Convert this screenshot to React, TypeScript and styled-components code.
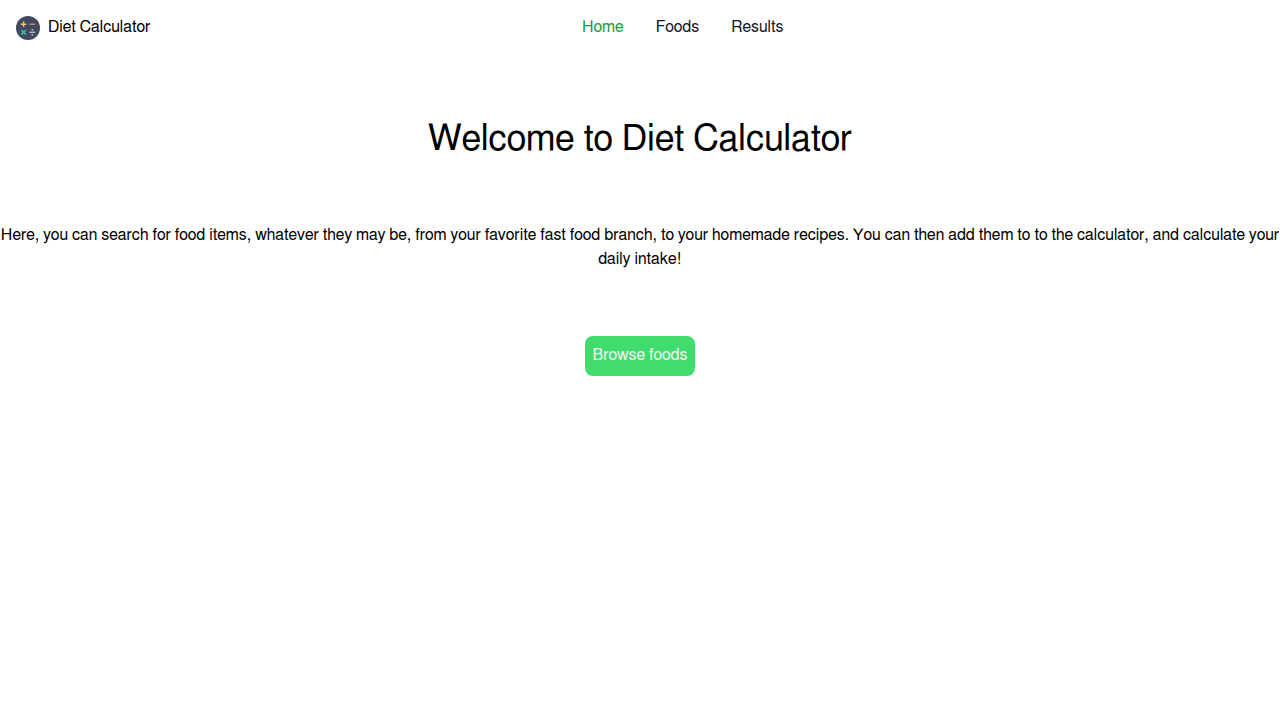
import styled, { createGlobalStyle } from "styled-components";

const GlobalStyle = createGlobalStyle`
  *, *::before, *::after { box-sizing: border-box; }
  body {
    margin: 0;
    background: #fff;
    color: #000;
    font-family: FreeSans, "Liberation Sans", Arial, sans-serif;
    font-kerning: none;
    font-size: 16px;
    line-height: 24px;
  }
`;

const Header = styled.header`
  display: flex;
  justify-content: space-between;
  padding: 16px 65px 16px 16px;
`;

const Brand = styled.a`
  display: flex;
  gap: 8px;
  color: inherit;
  text-decoration: none;
`;

const BrandName = styled.span`
  line-height: 22px;
`;

const Nav = styled.nav`
  display: flex;
  gap: 32px;
`;

const NavLink = styled.a<{ $active?: boolean }>`
  color: ${({ $active }) => ($active ? "#169c3f" : "#111827")};
  line-height: 22px;
  text-decoration: none;
`;

const Main = styled.main`
  display: flex;
  flex-direction: column;
  align-items: center;
  gap: 64px;
  padding-top: 63px;
  text-align: center;
`;

const Title = styled.h1`
  margin: 0;
  font-size: 36px;
  font-weight: 400;
  line-height: 40px;
`;

const Intro = styled.p`
  margin: 0;
  padding-bottom: 1px;
`;

const BrowseButton = styled.button`
  padding: 7px 8px 9px;
  border: 0;
  border-radius: 8px;
  background: #40dc6e;
  color: #f3f4f6;
  font: inherit;
  font-kerning: none;
  cursor: pointer;
`;

function Logo() {
  return (
    <svg width="24" height="24" viewBox="0 0 24 24" fill="none" aria-hidden="true">
      <circle cx="12" cy="12" r="12" fill="#414860" />
      <path d="M7.6 5.4v5.6M4.8 8.2h5.6" stroke="#f3c75f" strokeWidth="1.4" />
      <path d="M13.6 8.2h5.6" stroke="#c69a80" strokeWidth="1.3" />
      <path d="M5.3 14l4.6 4.6M9.9 14l-4.6 4.6" stroke="#40b79b" strokeWidth="1.7" />
      <path d="M13.5 16.3h5.6" stroke="#bfc5d2" strokeWidth="1.3" />
      <circle cx="16.3" cy="13.8" r="0.9" fill="#bfc5d2" />
      <circle cx="16.3" cy="18.8" r="0.9" fill="#bfc5d2" />
    </svg>
  );
}

export default function App() {
  return (
    <>
      <GlobalStyle />
      <Header>
        <Brand href="#home">
          <Logo />
          <BrandName>Diet Calculator</BrandName>
        </Brand>
        <Nav aria-label="Main">
          <NavLink href="#home" $active aria-current="page">Home</NavLink>
          <NavLink href="#foods">Foods</NavLink>
          <NavLink href="#results">Results</NavLink>
        </Nav>
        <span />
      </Header>
      <Main>
        <Title>Welcome to Diet Calculator</Title>
        <Intro>
          Here, you can search for food items, whatever they may be, from your
          favorite fast food branch, to your homemade recipes. You can then add
          them to to the calculator, and calculate your daily intake!
        </Intro>
        <BrowseButton type="button">Browse foods</BrowseButton>
      </Main>
    </>
  );
}
